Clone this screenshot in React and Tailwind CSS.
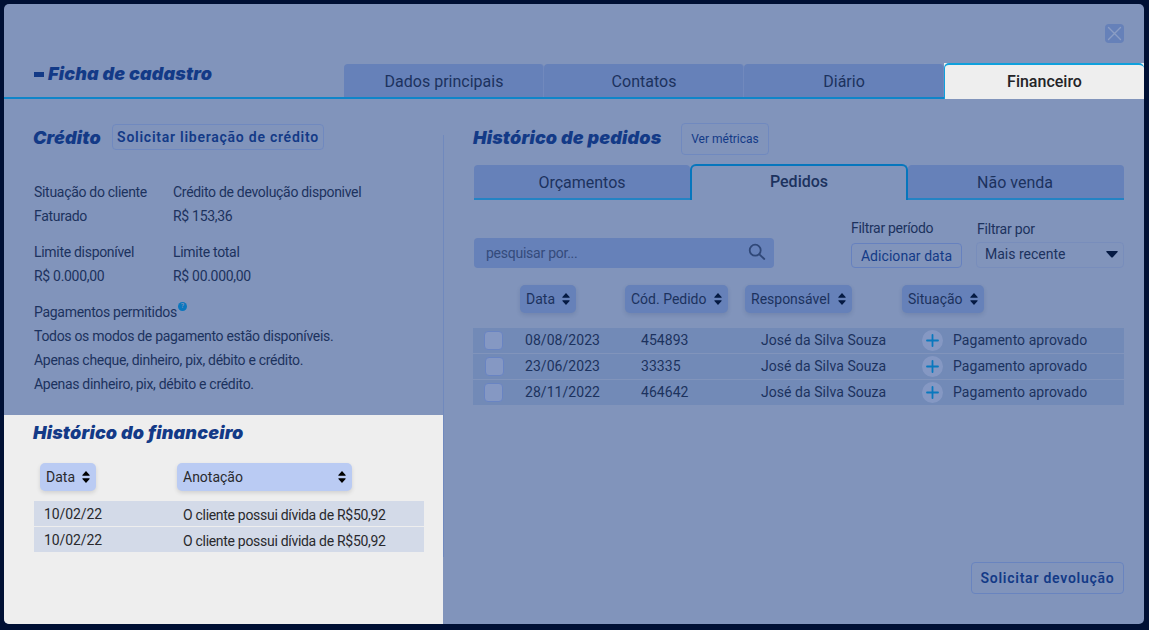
import React from "react";

const heading =
  "font-['Inter','Roboto',sans-serif] font-black italic text-[18px] leading-6 tracking-[0.15px] text-[#133a87] whitespace-nowrap";

function Sorter({ color }) {
  return (
    <svg width="8" height="12" viewBox="0 0 8 12" fill={color} className="shrink-0">
      <path d="M4 0 7.6 3.9Q8 4.8 7.1 4.8H.9Q0 4.8.4 3.9ZM4 12 .4 8.1Q0 7.2.9 7.2H7.1Q8 7.2 7.6 8.1Z" />
    </svg>
  );
}

function SortButton({ label, className, light }) {
  return (
    <button
      className={`flex h-7 shrink-0 items-center justify-between rounded-[5px] pl-1.5 pr-[6px] text-[14px] whitespace-nowrap ${
        light
          ? "bg-[#bacbf3] text-[#29292d] shadow-[0_2px_4px_rgba(0,0,0,0.12)]"
          : "bg-[#6681b9] text-[#1c325e] shadow-[0_2px_4px_rgba(20,40,90,0.14)]"
      } ${className}`}
    >
      <span>{label}</span>
      <Sorter color={light ? "#000000" : "#051a43"} />
    </button>
  );
}

function MainTab({ label }) {
  return (
    <div className="flex h-[33px] w-[200px] items-center justify-center rounded-t-[4px] border-r border-[#7189bd] bg-[#6681b9] pt-[2px] pl-[1px] text-[16px]">
      {label}
    </div>
  );
}

function Pair({ a, b, c, d }) {
  return (
    <div className="grid grid-cols-[139px_1fr] leading-6 tracking-[-0.3px] whitespace-nowrap">
      <span>{a}</span>
      <span>{b}</span>
      <span>{c}</span>
      <span>{d}</span>
    </div>
  );
}

function Header() {
  return (
    <header className="flex h-[95px] shrink-0 flex-col">
      <div className="flex h-[59px] justify-end pt-[20px] pr-5">
        <button className="flex h-[19px] w-[19px] items-center justify-center rounded-[4px] bg-[#6681b9]">
          <svg width="15" height="15" viewBox="0 0 15 15" fill="none" stroke="#8b9dc4" strokeWidth="1.4" strokeLinecap="round">
            <path d="m1.5 1.5 12 12m0-12-12 12" />
          </svg>
        </button>
      </div>
      <div className="flex h-9">
        <div className="flex h-9 w-[340px] items-start border-b-2 border-[#0f85c9] pl-[30px]">
          <span className="mt-[9px] h-[5px] w-[10px] bg-[#133a87]" />
          <h1 className={`${heading} ml-[4px] -mt-[1px]`}>Ficha de cadastro</h1>
        </div>
        <nav className="flex h-9 w-[600px] items-end border-b-2 border-[#0f85c9] text-[#1c325e]">
          <MainTab label="Dados principais" />
          <MainTab label="Contatos" />
          <MainTab label="Diário" />
        </nav>
        <div className="flex h-9 w-[200px] bg-[#eeeeee]">
          <div className="flex h-9 w-[200px] items-center justify-center rounded-t-[5px] border-t-2 border-l border-[#0fa0dc] bg-[#eeeeee] text-[16px] font-medium text-[#242427]">
            Financeiro
          </div>
        </div>
      </div>
    </header>
  );
}

function CreditSection() {
  return (
    <section className="h-[316px] shrink-0 pl-[29px] pt-[25px] text-[14px] text-[#1c325e]">
      <div className="flex h-[26px] items-center">
        <h2 className={`${heading} w-[79px] pt-[2px]`}>Crédito</h2>
        <button className="h-[26px] w-[212px] rounded-[4px] border border-[#7089bf] text-[14px] font-semibold tracking-[0.75px] whitespace-nowrap text-[#133a87]">
          Solicitar liberação de crédito
        </button>
      </div>
      <div className="mt-[30px] flex flex-col gap-3 pl-px">
        <Pair a="Situação do cliente" b="Crédito de devolução disponivel" c="Faturado" d="R$ 153,36" />
        <Pair a="Limite disponível" b="Limite total" c="R$ 0.000,00" d="R$ 00.000,00" />
        <div className="flex flex-col leading-6 tracking-[-0.3px] whitespace-nowrap">
          <div className="flex">
            <span>Pagamentos permitidos</span>
            <span className="mt-[2px] ml-[1px] flex h-[9px] w-[9px] items-center justify-center rounded-full bg-[#0b77be] text-[7px] leading-none font-medium tracking-normal text-[#8194bb]">
              ?
            </span>
          </div>
          <span>Todos os modos de pagamento estão disponíveis.</span>
          <span>Apenas cheque, dinheiro, pix, débito e crédito.</span>
          <span>Apenas dinheiro, pix, débito e crédito.</span>
        </div>
      </div>
    </section>
  );
}

function FinanceHistory() {
  return (
    <section className="flex-1 bg-[#eeeeee] pl-[29px] pt-[6px] text-[14px] text-[#29292d]">
      <h2 className={heading}>Histórico do financeiro</h2>
      <div className="mt-[18px] flex pl-[7px]">
        <SortButton light label="Data" className="w-14" />
        <SortButton light label="Anotação" className="ml-[81px] w-[175px]" />
      </div>
      <div className="mt-[10px] ml-px flex w-[390px] flex-col gap-px">
        {["a", "b"].map((id) => (
          <div key={id} className="flex h-[25px] items-center bg-[#d3dae8] pl-[10px] whitespace-nowrap">
            <span className="w-[139px] pt-[2px] tracking-[-0.1px]">10/02/22</span>
            <span className="pt-[4px] tracking-[-0.3px]">O cliente possui dívida de R$50,92</span>
          </div>
        ))}
      </div>
    </section>
  );
}

const orders = [
  { date: "08/08/2023", code: "454893" },
  { date: "23/06/2023", code: "33335" },
  { date: "28/11/2022", code: "464642" },
];

function OrderRow({ date, code, shifted }) {
  return (
    <div className="flex h-[25px] items-center bg-[#728ab7] tracking-[0.05px] whitespace-nowrap">
      <div className={`${shifted ? "pl-[12px]" : "pl-[11px]"} w-[52px]`}>
        <div className="h-[19px] w-[19px] rounded-[4px] border border-[#6984c2] bg-[#8598c3]" />
      </div>
      <span className="w-[116px]">{date}</span>
      <span className="w-[120px]">{code}</span>
      <span className="w-[161px]">José da Silva Souza</span>
      <span className="mr-[10px] flex h-[21px] w-[21px] items-center justify-center rounded-full bg-[#8598c3]">
        <svg width="13" height="13" viewBox="0 0 13 13" stroke="#0878be" strokeWidth="1.8" strokeLinecap="round">
          <path d="M6.5 1v11M1 6.5h11" />
        </svg>
      </span>
      <span>Pagamento aprovado</span>
    </div>
  );
}

function OrdersSection() {
  return (
    <section className="flex flex-1 flex-col pt-[24px] pl-[29px] text-[14px] text-[#1c325e]">
      <div className="flex h-8 items-center">
        <h2 className={`${heading} -mt-[2px] w-[208px]`}>Histórico de pedidos</h2>
        <button className="h-8 w-[88px] rounded-[4px] border border-[#7089bf] text-[12px] whitespace-nowrap text-[#133a87]">
          Ver métricas
        </button>
      </div>
      <div className="mt-[9px] ml-px flex h-9 w-[650px] items-end text-[16px]">
        <div className="flex h-[35px] w-[216px] items-center justify-center rounded-t-[4px] border-b-2 border-[#2383c4] bg-[#6681b9] pt-[2px]">
          Orçamentos
        </div>
        <div className="flex h-9 w-[218px] items-center justify-center rounded-t-[6px] border-x-2 border-t-2 border-[#0676bd] pb-[2px] font-medium">
          Pedidos
        </div>
        <div className="flex h-[35px] w-[216px] items-center justify-center rounded-t-[4px] border-b-2 border-[#2383c4] bg-[#6681b9] pt-[2px] pr-[2px]">
          Não venda
        </div>
      </div>
      <div className="mt-[16px] ml-px flex h-[52px] w-[650px] items-end">
        <div className="flex h-[30px] w-[300px] items-center justify-between rounded-[4px] bg-[#6681b9] pr-[8px] pl-3 text-[#344b7c]">
          <span className="tracking-[-0.25px]">pesquisar por...</span>
          <svg width="18" height="18" viewBox="0 0 18 18" fill="none" stroke="#304878" strokeWidth="1.8" strokeLinecap="round" className="-mt-[2px]">
            <circle cx="7.2" cy="7.2" r="5.5" />
            <path d="m11.4 11.4 4.9 4.6" />
          </svg>
        </div>
        <div className="ml-[77px] flex w-[111px] flex-col">
          <span className="mb-[3px] leading-6 tracking-[-0.3px]">Filtrar período</span>
          <button className="h-[25px] rounded-[4px] border border-[#6681bf] pt-px text-[14px] tracking-[0.05px] whitespace-nowrap text-[#133a87]">
            Adicionar data
          </button>
        </div>
        <div className="ml-[14px] flex w-[148px] flex-col">
          <span className="mb-[1px] pl-[1px] leading-6 tracking-[-0.2px]">Filtrar por</span>
          <div className="flex h-[26px] items-center justify-between rounded-[4px] border border-[#788dbb] pr-[5px] pb-px pl-2">
            <span>Mais recente</span>
            <svg width="12" height="7" viewBox="0 0 12 7" fill="#051a43">
              <path d="M.8 0h10.4q.9.3.4 1L6.8 6.2q-.8.8-1.6 0L.4 1Q0 .3.8 0Z" />
            </svg>
          </div>
        </div>
      </div>
      <div className="mt-[17px] flex pl-[47px]">
        <SortButton label="Data" className="w-14" />
        <SortButton label="Cód. Pedido" className="ml-[49px] w-[103px]" />
        <SortButton label="Responsável" className="ml-[17px] w-[107px]" />
        <SortButton label="Situação" className="ml-[50px] w-[82px]" />
      </div>
      <div className="mt-[15px] flex w-[651px] flex-col gap-px">
        {orders.map((order, i) => (
          <OrderRow key={order.code} {...order} shifted={i === 1} />
        ))}
      </div>
      <div className="mt-auto flex justify-end pr-5 pb-[30px]">
        <button className="h-8 w-[153px] rounded-[4px] border border-[#6984bf] text-[14px] font-semibold tracking-[0.75px] whitespace-nowrap text-[#133a87]">
          Solicitar devolução
        </button>
      </div>
    </section>
  );
}

export default function App() {
  return (
    <div className="h-[630px] w-[1149px] overflow-hidden bg-[#001034] pt-1 pr-[5px] pb-1.5 pl-1 font-['Roboto',sans-serif]">
      <main className="flex h-[620px] w-[1140px] flex-col overflow-hidden rounded-[5px] bg-[#8194bb]">
        <Header />
        <div className="flex flex-1">
          <div className="flex w-[439px] flex-col">
            <CreditSection />
            <FinanceHistory />
          </div>
          <div className="mt-9 h-[422px] w-px bg-[#7089bd]" />
          <OrdersSection />
        </div>
      </main>
    </div>
  );
}
